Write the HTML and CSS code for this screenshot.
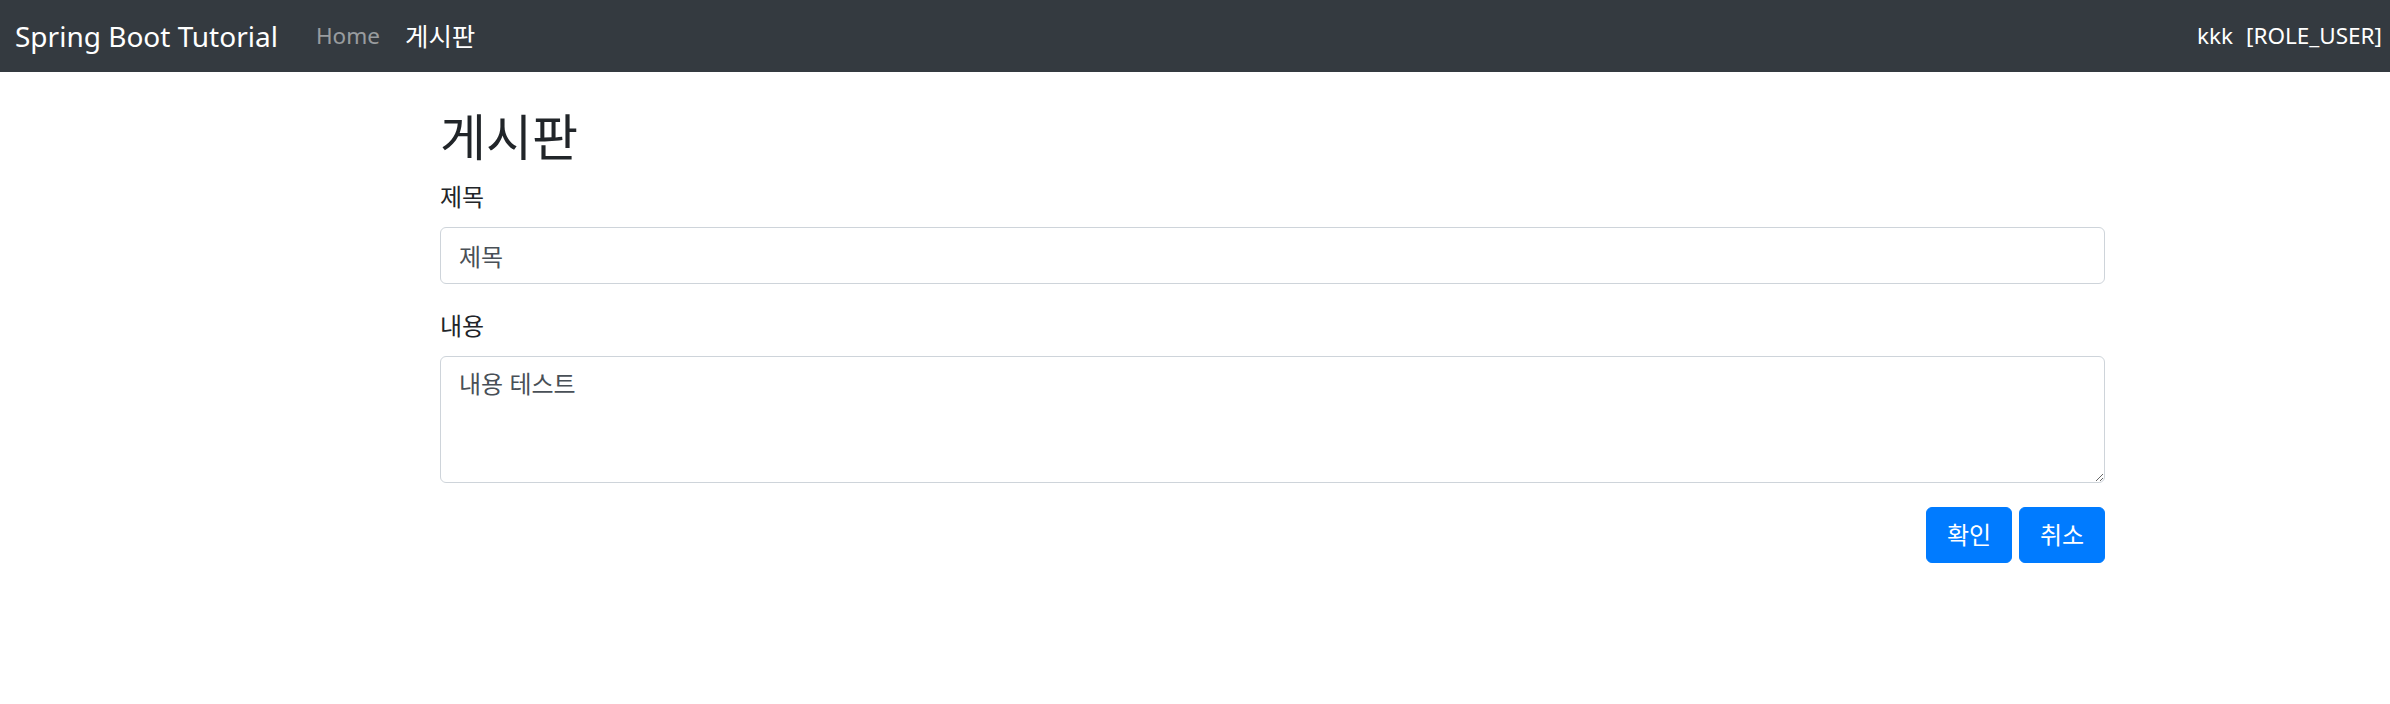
FILE: index.html
```html
<!DOCTYPE html>
<html lang="ko">
<head>
    <meta charset="UTF-8">
    <meta name="viewport" content="width=device-width, initial-scale=1.0">
    <title>게시판</title>
    <link rel="stylesheet" href="styles.css">
</head>
<body>
    <nav class="navbar">
        <a class="brand" href="#">Spring Boot Tutorial</a>
        <ul class="nav">
            <li><a class="nav-link" href="#">Home</a></li>
            <li><a class="nav-link active" href="#">게시판</a></li>
        </ul>
        <div class="user">
            <span>kkk</span>
            <span>[ROLE_USER]</span>
        </div>
    </nav>

    <div class="container">
        <h2>게시판</h2>
        <form>
            <div class="form-group">
                <label for="title">제목</label>
                <input type="text" class="form-control" id="title" value="제목">
            </div>
            <div class="form-group">
                <label for="content">내용</label>
                <textarea class="form-control" id="content" rows="3">내용 테스트</textarea>
            </div>
            <div class="buttons">
                <button type="submit" class="btn">확인</button>
                <button type="button" class="btn">취소</button>
            </div>
        </form>
    </div>
</body>
</html>
```

FILE: styles.css
```css
* {
    margin: 0;
    padding: 0;
    box-sizing: border-box;
}
body {
    font-family: "Noto Sans", "Noto Sans CJK KR", sans-serif;
    font-size: 24px;
    line-height: 1.5;
    color: #212529;
    background: #fff;
}
a {
    text-decoration: none;
}
.navbar {
    background: #343a40;
    height: 72px;
    padding: 0 8px 0 15px;
    display: flex;
    align-items: center;
    font-size: 22.5px;
}
.brand {
    color: #fff;
    font-size: 28px;
    margin-right: 26px;
}
.nav {
    list-style: none;
    display: flex;
    align-items: center;
}
.nav-link {
    display: block;
    padding: 0 12px;
    color: rgba(255,255,255,0.5);
}
.nav-link.active {
    color: #fff;
    font-size: 25.5px;
    padding-left: 13px;
}
.user {
    margin-left: auto;
    color: #fff;
    display: flex;
    gap: 13px;
}
.container {
    width: 1665px;
    margin: 35px 0 0 440px;
}
h2 {
    font-size: 50px;
    font-weight: 400;
    line-height: 1.2;
    margin-bottom: 12px;
}
label {
    display: inline-block;
    margin-bottom: 12px;
}
.form-group {
    margin-bottom: 24px;
}
.form-control {
    display: block;
    width: 100%;
    height: 57px;
    padding: 9px 18px;
    font: inherit;
    color: #495057;
    background: #fff;
    border: 1.5px solid #ced4da;
    border-radius: 6px;
}
textarea.form-control {
    height: 127px;
    resize: vertical;
}
.buttons {
    display: flex;
    justify-content: flex-end;
    gap: 7px;
}
.btn {
    font: inherit;
    color: #fff;
    background: #007bff;
    border: 1.5px solid #007bff;
    border-radius: 6px;
    width: 86px;
    height: 56px;
    cursor: pointer;
}
```
